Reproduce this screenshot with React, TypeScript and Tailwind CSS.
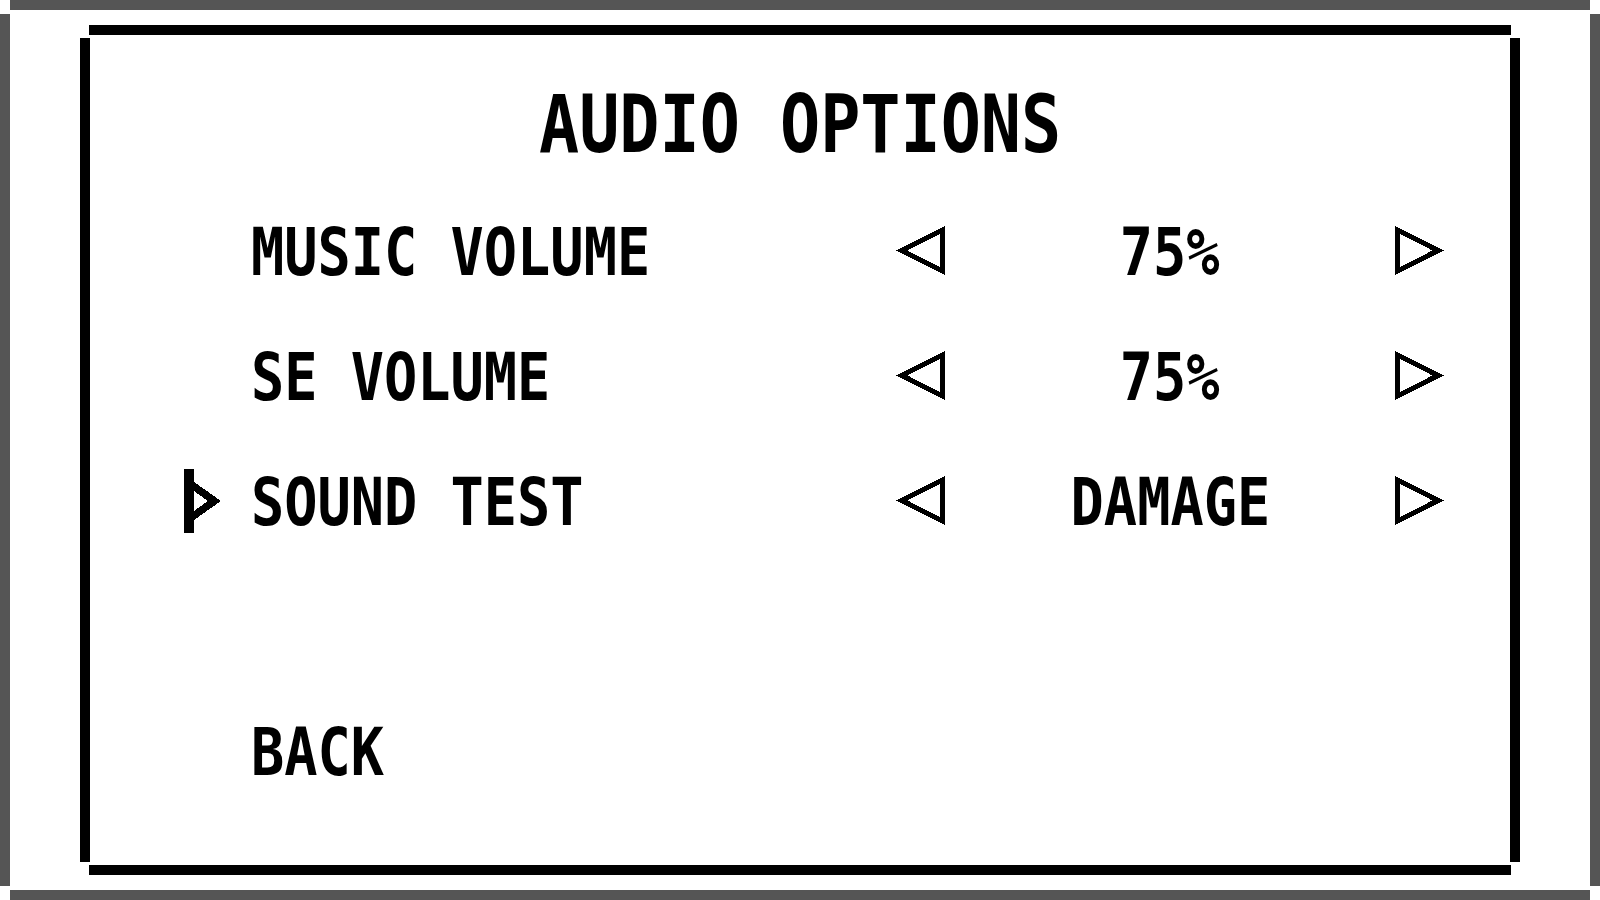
import React from "react";

const MONO = "font-['DejaVu_Sans_Mono','Liberation_Mono',monospace] font-bold";

function LeftArrow() {
  return (
    <svg width="50" height="49" viewBox="0 0 50 49" className="block">
      <polygon
        points="47.5,4 47.5,45 7,24.5"
        fill="none"
        stroke="#000"
        strokeWidth="5"
        strokeLinejoin="miter"
        shapeRendering="crispEdges"
      />
    </svg>
  );
}

function RightArrow() {
  return (
    <svg width="50" height="49" viewBox="0 0 50 49" className="block">
      <polygon
        points="2.5,4 2.5,45 43,24.5"
        fill="none"
        stroke="#000"
        strokeWidth="5"
        strokeLinejoin="miter"
        shapeRendering="crispEdges"
      />
    </svg>
  );
}

// Pixel-style selection cursor: a bar with a small hollow arrow head.
function Cursor() {
  return (
    <svg width="36" height="64" viewBox="0 0 36 64" className="block" shapeRendering="crispEdges">
      <rect x="0" y="0" width="10" height="64" fill="#000" />
      <polygon points="10,13 37,32 10,51" fill="#000" />
      <polygon points="10,22 24,32 10,42" fill="#fff" />
    </svg>
  );
}

type Row = { label: string; value?: string; selected?: boolean };

const rows: (Row | null)[] = [
  { label: "MUSIC VOLUME", value: "75%" },
  { label: "SE VOLUME", value: "75%" },
  { label: "SOUND TEST", value: "DAMAGE", selected: true },
  null,
  { label: "BACK" },
];

function OptionRow({ row }: { row: Row | null }) {
  if (!row) return <div className="h-[125px]" />;
  return (
    <div className="h-[125px] flex items-center">
      <div className="w-[161px] pl-[94px] shrink-0">
        {row.selected && (
          <div className="mb-[4px]">
            <Cursor />
          </div>
        )}
      </div>
      <div className="w-[644px] shrink-0">
        <span className={`${MONO} inline-block text-[65px] leading-none text-black origin-left scale-x-[0.85]`}>
          {row.label}
        </span>
      </div>
      {row.value && (
        <>
          <div className="w-[50px] shrink-0 mb-[5px]">
            <LeftArrow />
          </div>
          <div className="w-[450px] shrink-0 text-center">
            <span className={`${MONO} inline-block text-[65px] leading-none text-black origin-center scale-x-[0.85]`}>
              {row.value}
            </span>
          </div>
          <div className="w-[50px] shrink-0 mb-[5px]">
            <RightArrow />
          </div>
        </>
      )}
    </div>
  );
}

export default function App() {
  return (
    <div className="w-[1600px] h-[900px] bg-white grid grid-cols-[10px_1fr_10px] grid-rows-[10px_1fr_10px]">
      {/* outer grey frame */}
      <div />
      <div className="bg-[#555555]" />
      <div />

      <div className="bg-[#555555] my-[4px]" />

      <div className="px-[70px] py-[15px] flex">
        {/* black dialog box */}
        <div className="flex-1 grid grid-cols-[10px_1fr_10px] grid-rows-[10px_1fr_10px]">
          <div />
          <div className="bg-black -mx-px" />
          <div />

          <div className="bg-black my-[3px]" />
          <div className="flex flex-col">
            <div className="pt-[50px] text-center">
              <span className={`${MONO} inline-block text-[80px] leading-none text-black origin-center scale-x-[0.834]`}>
                AUDIO OPTIONS
              </span>
            </div>
            <div className="mt-[25px] flex flex-col">
              {rows.map((r, i) => (
                <OptionRow key={i} row={r} />
              ))}
            </div>
          </div>
          <div className="bg-black my-[3px]" />

          <div />
          <div className="bg-black -mx-px" />
          <div />
        </div>
      </div>

      <div className="bg-[#555555] my-[4px]" />

      <div />
      <div className="bg-[#555555]" />
      <div />
    </div>
  );
}
